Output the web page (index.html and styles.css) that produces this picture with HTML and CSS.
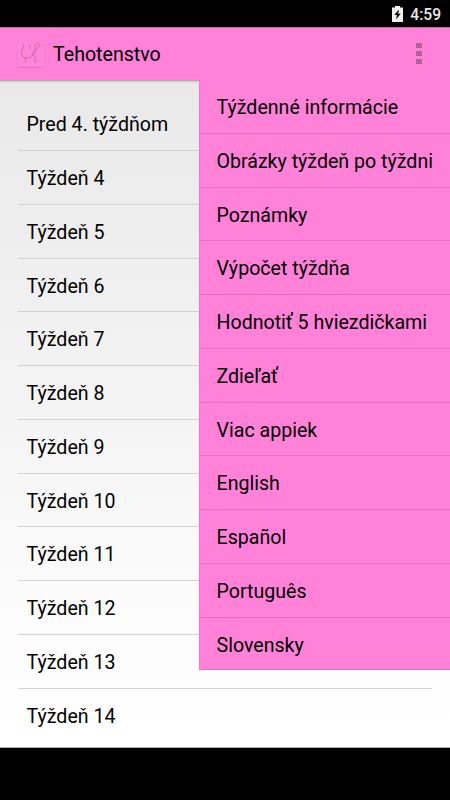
FILE: index.html
```
<!DOCTYPE html>
<html lang="sk">
<head>
    <meta charset="utf-8">
    <title>Tehotenstvo</title>
    <link rel="stylesheet" href="styles.css">
</head>
<body>
    <div class="status-bar">
        <svg class="battery" width="11" height="16" viewBox="0 0 11 16">
            <path d="M3 0h5v1.500h3V16H0V1.500h3z" fill="#f2f2f2"/>
            <path d="M7 3.500L2.300 9h2.600L4 13.300 8.800 7.700H6.200z" fill="#000"/>
        </svg>
        <span class="clock">4:59</span>
    </div>

    <header class="action-bar">
        <svg class="logo" width="30" height="30" viewBox="0 0 30 30">
            <rect x="1" y="1" width="27.500" height="27.500" rx="2" fill="#fd85da" stroke="#f67fd2" stroke-width=".7"/>
            <path d="M1.500 28.300h26.500" stroke="#e074c0"/>
            <path d="M7 5c1 2 1 3-.5 5-2 4-1 8.500 3.500 9 5 0 7.500-3 9.500-7 2-3 5-5 4-7-2-2-5 0-4 2 1 3-3 6-3.500 10M13.500 5c2 1-1 4 1.500 5.500M9.500 19v4.500M19 16c-.5 2 .5 4 .5 7.500" fill="none" stroke="#d8699c" stroke-width="1"/>
        </svg>
        <h1>Tehotenstvo</h1>
        <button class="overflow" aria-label="Menu"><i></i><i></i><i></i></button>
        <ul class="menu">
            <li>Týždenné informácie</li>
            <li>Obrázky týždeň po týždni</li>
            <li>Poznámky</li>
            <li>Výpočet týždňa</li>
            <li>Hodnotiť 5 hviezdičkami</li>
            <li>Zdieľať</li>
            <li>Viac appiek</li>
            <li>English</li>
            <li>Español</li>
            <li>Português</li>
            <li>Slovensky</li>
        </ul>
    </header>

    <main class="content">
        <ul class="weeks">
            <li>Pred 4. týždňom</li>
            <li>Týždeň 4</li>
            <li>Týždeň 5</li>
            <li>Týždeň 6</li>
            <li>Týždeň 7</li>
            <li>Týždeň 8</li>
            <li>Týždeň 9</li>
            <li>Týždeň 10</li>
            <li>Týždeň 11</li>
            <li>Týždeň 12</li>
            <li>Týždeň 13</li>
            <li>Týždeň 14</li>
        </ul>
    </main>
</body>
</html>
```
FILE: styles.css
```
* {
    box-sizing: border-box;
}
body {
    margin: 0;
    height: 800px;
    background: #000;
    color: #000;
    font-family: Roboto, sans-serif;
    font-size: 19.6px;
    display: flex;
    flex-direction: column;
    overflow: hidden;
}
ul {
    list-style: none;
    margin: 0;
    padding: 0;
}
.status-bar {
    height: 27px;
    flex: none;
    display: flex;
    align-items: center;
    justify-content: flex-end;
    gap: 7px;
    padding-right: 9px;
    color: #e8e8e8;
}
.clock {
    font-size: 15.6px;
    font-weight: 500;
    padding-top: 2px;
}
.action-bar {
    position: relative;
    height: 54px;
    flex: none;
    display: flex;
    align-items: center;
    padding: 0 18px 0 16px;
    background: #ff82d8;
    border-top: 1px solid #c465a6;
    border-bottom: 1px solid #a3b0a9;
    box-shadow: 0 1px 2px rgba(0, 0, 0, 0.15);
}
.action-bar h1 {
    flex: 1;
    margin: 1px 0 0 7px;
    font-size: 19.6px;
    font-weight: 400;
}
.overflow {
    display: flex;
    flex-direction: column;
    align-items: center;
    gap: 3px;
    width: 26px;
    padding: 0 0 2px;
    border: none;
    background: none;
}
.overflow i {
    width: 6px;
    height: 5px;
    background: #b0609a;
}
.menu {
    position: absolute;
    top: 52px;
    right: 0;
    width: 251px;
    background: #ff82d8;
    border-left: 1px solid #ff70d4;
    border-bottom: 1px solid #f568c8;
}
.menu li {
    height: 53.75px;
    line-height: 55px;
    padding-left: 16.5px;
    border-bottom: 1px solid #e274bf;
    white-space: nowrap;
}
.menu li:last-child {
    height: 51.5px;
    border-bottom: none;
}
.content {
    height: 667px;
    flex: none;
    padding: 16.4px 18px 0 17.5px;
    background: linear-gradient(#e9e9e9, #f3f3f3 45%, #fcfcfc 80%, #fff);
    border-bottom: 1px solid #aaa;
}
.weeks li {
    height: 53.75px;
    line-height: 55px;
    padding-left: 9px;
    border-bottom: 1px solid #d3d3d3;
}
.weeks li:last-child {
    border-bottom: none;
}
```
